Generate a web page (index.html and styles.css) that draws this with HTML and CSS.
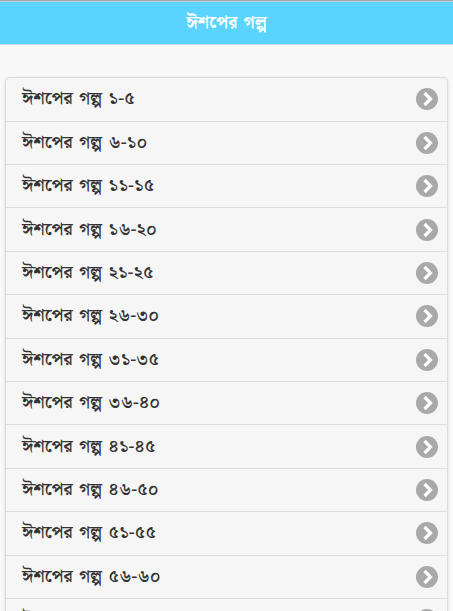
FILE: index.html
```html
<!doctype html>
<html lang="bn">
	<head>
		<meta charset="utf-8"/>
		<title>ঈশপের গল্প</title>
		<link rel="stylesheet" href="styles.css">
	</head>
	<body>
		<div class="header"><h1>ঈশপের গল্প</h1></div>
		<ul class="listview" id="list"></ul>
		<script src="list.js"></script>
	</body>
</html>
```

FILE: styles.css
```css
html,body{height:100%;margin:0;padding:0;}
body{background:#f9f9f9;color:#333;font-family:"Noto Serif Bengali","Noto Sans Bengali","Noto Sans",serif;font-size:17.4px;overflow:hidden;}

.header{box-sizing:border-box;height:45px;background:#5bd3ff;border-top:1px solid #a5a5a5;border-bottom:1px solid #c5dce5;box-shadow:inset 0 1px 0 #b9d3dc;}
.header h1{margin:0;font-size:17px;line-height:44px;text-align:center;color:#fff;word-spacing:2px;}

.listview{margin:32px 5px 0;padding:0;list-style:none;background:#f6f6f6;border:1px solid #ddd;border-radius:5px;box-shadow:0 1px 3px rgba(0,0,0,.15);}
.listview li{display:flex;align-items:center;justify-content:space-between;box-sizing:border-box;height:43.4px;padding:0 9px 0 16px;border-bottom:1px solid #ddd;font-weight:600;}
.listview li:first-child{height:43.7px;}
.title{line-height:24px;word-spacing:2px;}
.num{font-size:17.7px;letter-spacing:.3px;}
.icon{width:22px;height:22px;}
```

FILE: list.js
```js
var digits = '০১২৩৪৫৬৭৮৯';
function bn(n){
	return String(n).replace(/\d/g, function(d){ return digits[d]; });
}
var html = '';
for(var i = 1; i <= 61; i += 5){
	html += '<li><span class="title">ঈশপের গল্প <span class="num">' + bn(i) + '-' + bn(i + 4) + '</span></span>' +
		'<svg class="icon" viewBox="0 0 22 22"><circle cx="11" cy="11" r="11" fill="#a9a9a9"/>' +
		'<path d="M8.5 5l6 6-6 6" fill="none" stroke="#fff" stroke-width="3.2"/></svg></li>';
}
document.getElementById('list').innerHTML = html;
```
